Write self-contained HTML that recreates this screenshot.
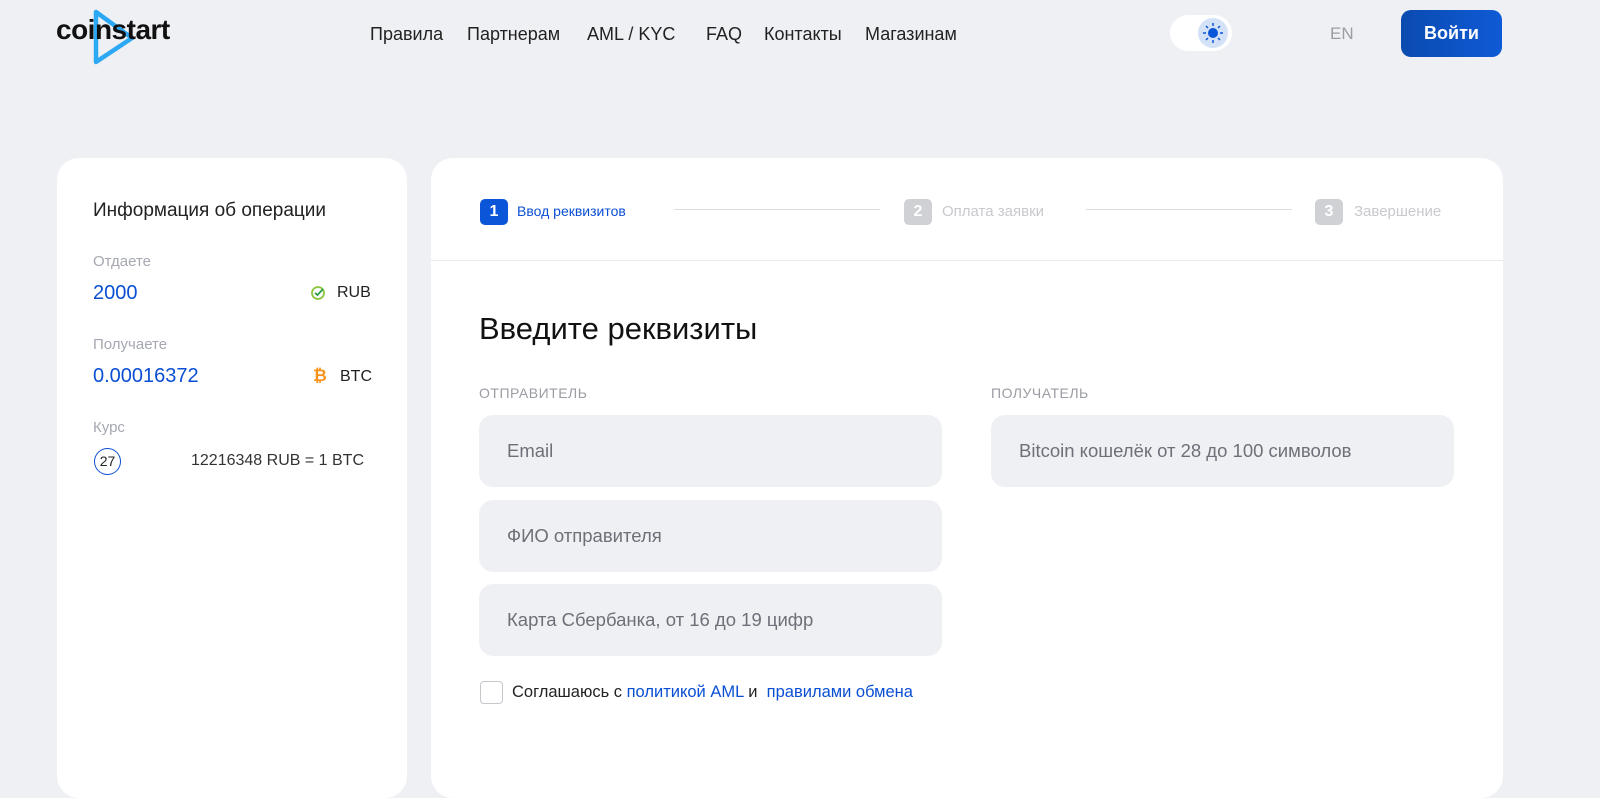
<!DOCTYPE html>
<html><head><meta charset="utf-8"><style>
*{box-sizing:border-box;margin:0;padding:0}
body{width:1600px;height:764px;overflow:hidden;background:#eff0f4;font-family:"Liberation Sans",sans-serif;color:#1a1a1a;position:relative}
.nav a{position:absolute;top:24px;font-size:18px;color:#222;text-decoration:none}
.card{position:absolute;background:#fff;border-radius:22px}
.lbl{position:absolute;font-size:15px;color:#a5a8b0}
.val{position:absolute;font-size:20px;color:#0a4fd3}
.inp{position:absolute;background:#eff0f4;border-radius:14px;width:463px;height:72px;font-size:18.5px;color:#6d7078;padding:25px 0 0 28px}
</style></head><body>
<svg style="position:absolute;left:90px;top:6px" width="50" height="60"><path d="M6 6 L42 32 L6 56 Z" fill="none" stroke="#2da8f5" stroke-width="4.5" stroke-linejoin="round"/></svg>
<div style="position:absolute;left:56px;top:14px;font-size:28px;font-weight:bold;letter-spacing:-0.5px;color:#111">coinstart</div>
<div class="nav"><a style="left:370px">Правила</a><a style="left:467px">Партнерам</a><a style="left:587px">AML / KYC</a><a style="left:706px">FAQ</a><a style="left:764px">Контакты</a><a style="left:865px">Магазинам</a></div>
<div style="position:absolute;left:1170px;top:15px;width:62px;height:36px;background:#fff;border-radius:18px"></div>
<div style="position:absolute;left:1198px;top:18px;width:30px;height:30px;background:#d4e2f7;border-radius:50%"></div>
<svg style="position:absolute;left:1198px;top:18px" width="30" height="30"><circle cx="15" cy="15" r="5" fill="#0a55d8"/><g stroke="#0a55d8" stroke-width="1.5"><path d="M15 5v3M15 22v3M5 15h3M22 15h3M8 8l2 2M20 20l2 2M22 8l-2 2M8 22l2-2"/></g></svg>
<div style="position:absolute;left:1330px;top:24px;font-size:17px;color:#9a9ca3">EN</div>
<div style="position:absolute;left:1401px;top:10px;width:101px;height:47px;background:linear-gradient(90deg,#0b4bb0,#0e5ad6);border-radius:10px;color:#fff;font-weight:bold;font-size:18px;text-align:center;line-height:47px">Войти</div>

<div class="card" style="left:57px;top:158px;width:350px;height:640px">
<div style="position:absolute;left:36px;top:42px;font-size:19px;color:#222">Информация об операции</div>
<div class="lbl" style="left:36px;top:95px">Отдаете</div>
<div class="val" style="left:36px;top:124px">2000</div>
<svg style="position:absolute;left:253px;top:127px" width="16" height="16"><circle cx="8" cy="8" r="6" fill="none" stroke="#8cc63f" stroke-width="1.8"/><path d="M5 8l2.5 2L13 4" fill="none" stroke="#2e9e4a" stroke-width="1.8"/></svg>
<div style="position:absolute;left:280px;top:126px;font-size:16px;color:#222">RUB</div>
<div class="lbl" style="left:36px;top:178px">Получаете</div>
<div class="val" style="left:36px;top:207px">0.00016372</div>
<div style="position:absolute;left:256px;top:208px;font-size:17px;color:#f7931a;font-weight:bold">₿</div>
<div style="position:absolute;left:283px;top:210px;font-size:16px;color:#222">BTC</div>
<div class="lbl" style="left:36px;top:261px">Курс</div>
<div style="position:absolute;left:37px;top:290px;width:27px;height:27px;border:1.5px solid #0a4fd3;border-radius:50%;font-size:14px;text-align:center;line-height:24px;color:#222">27</div>
<div style="position:absolute;left:134px;top:294px;font-size:16px;color:#333">12216348 RUB = 1 BTC</div>
</div>

<div class="card" style="left:431px;top:158px;width:1072px;height:640px">
<div style="position:absolute;left:49px;top:41px;width:28px;height:26px;background:#0a55d8;border-radius:5px;color:#fff;font-size:16px;font-weight:bold;text-align:center;line-height:26px">1</div>
<div style="position:absolute;left:86px;top:45px;font-size:14px;color:#0a4fd3">Ввод реквизитов</div>
<div style="position:absolute;left:243px;top:51px;width:206px;height:1px;background:#dcdde2"></div>
<div style="position:absolute;left:473px;top:41px;width:28px;height:26px;background:#d0d1d5;border-radius:5px;color:#fff;font-size:16px;font-weight:bold;text-align:center;line-height:26px">2</div>
<div style="position:absolute;left:511px;top:45px;font-size:15px;color:#c8c9cd">Оплата заявки</div>
<div style="position:absolute;left:655px;top:51px;width:206px;height:1px;background:#dcdde2"></div>
<div style="position:absolute;left:884px;top:41px;width:28px;height:26px;background:#d0d1d5;border-radius:5px;color:#fff;font-size:16px;font-weight:bold;text-align:center;line-height:26px">3</div>
<div style="position:absolute;left:923px;top:45px;font-size:15px;color:#c8c9cd">Завершение</div>
<div style="position:absolute;left:0;top:102px;width:1072px;height:1px;background:#e8e9ec"></div>
<div style="position:absolute;left:48px;top:153px;font-size:31px;color:#111">Введите реквизиты</div>
<div style="position:absolute;left:48px;top:227px;font-size:14px;color:#9a9ca3;letter-spacing:0.5px">ОТПРАВИТЕЛЬ</div>
<div style="position:absolute;left:560px;top:227px;font-size:14px;color:#9a9ca3;letter-spacing:0.5px">ПОЛУЧАТЕЛЬ</div>
<div class="inp" style="left:48px;top:257px">Email</div>
<div class="inp" style="left:48px;top:342px">ФИО отправителя</div>
<div class="inp" style="left:48px;top:426px">Карта Сбербанка, от 16 до 19 цифр</div>
<div class="inp" style="left:560px;top:257px">Bitcoin кошелёк от 28 до 100 символов</div>
<div style="position:absolute;left:49px;top:523px;width:23px;height:23px;border:1.5px solid #c5c7cc;border-radius:4px"></div>
<div style="position:absolute;left:81px;top:525px;font-size:16.5px;color:#222">Соглашаюсь с <span style="color:#0a4fd3">политикой AML</span> и &nbsp;<span style="color:#0a4fd3">правилами обмена</span></div>
</div>
</body></html>
